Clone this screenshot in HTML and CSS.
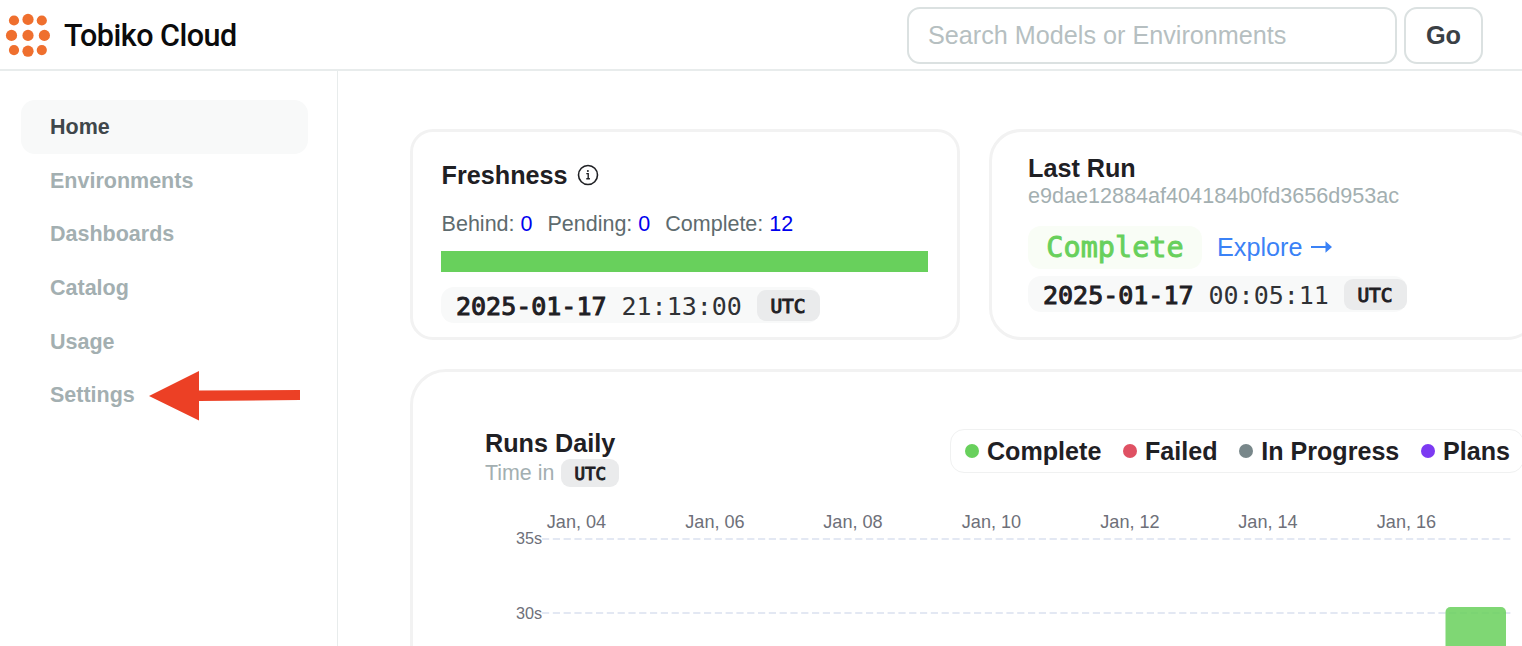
FILE: index.html
```
<!DOCTYPE html>
<html lang="en">
<head>
<meta charset="utf-8">
<title>Tobiko Cloud</title>
<link rel="stylesheet" href="styles.css">
</head>
<body>
<header class="header">
  <div class="brand">
    <svg class="logo" width="56" height="60" viewBox="0 0 56 60" fill="#ef6f2e">
      <circle cx="14" cy="20.5" r="5.1"/><circle cx="28" cy="19.4" r="5.6"/><circle cx="41.8" cy="20.5" r="5.1"/>
      <circle cx="11.5" cy="35.4" r="5.6"/><circle cx="28" cy="35.4" r="5.6"/><circle cx="44.4" cy="35.4" r="5.6"/>
      <circle cx="14" cy="50.1" r="5.1"/><circle cx="28" cy="51.2" r="5.6"/><circle cx="41.8" cy="50.1" r="5.1"/>
    </svg>
    <span class="brand-name">Tobiko Cloud</span>
  </div>
  <div class="search">
    <input class="search-input" type="text" placeholder="Search Models or Environments">
    <button class="go">Go</button>
  </div>
</header>
<div class="body">
  <nav class="sidebar">
    <a class="nav-item active">Home</a>
    <a class="nav-item">Environments</a>
    <a class="nav-item">Dashboards</a>
    <a class="nav-item">Catalog</a>
    <a class="nav-item">Usage</a>
    <a class="nav-item">Settings</a>
    <svg class="pointer" width="152" height="50" viewBox="0 0 152 50" fill="#ec4025"><path d="M0 25 50 0V19.5L151 19V29L50 30V49.500Z"/></svg>
  </nav>
  <main class="main">
    <div class="cards">
      <section class="card freshness">
        <h2 class="title">Freshness
          <svg class="info" width="22" height="22" viewBox="0 0 22 22" fill="none" stroke="#1f2024"><circle cx="11" cy="11" r="9.500" stroke-width="1.6"/><path d="M9.300 9.600h1.900v5M9.300 14.800h3.600" stroke-width="1.400"/><circle cx="10.900" cy="7" r="1" fill="#1f2024" stroke="none"/></svg>
        </h2>
        <div class="counts">
          <span>Behind: <b class="num">0</b></span><span>Pending: <b class="num">0</b></span><span>Complete: <b class="num">12</b></span>
        </div>
        <div class="bar"></div>
        <div class="stamp"><span class="date">2025-01-17</span><span class="time">21:13:00</span><span class="utc">UTC</span></div>
      </section>
      <section class="card last-run">
        <h2 class="title">Last Run</h2>
        <div class="hash">e9dae12884af404184b0fd3656d953ac</div>
        <div class="status-row"><span class="status">Complete</span><a class="explore">Explore
          <svg width="22" height="14" viewBox="0 0 22 14" fill="#3b82f6"><path d="M0 5.900h14.500V1.200L21 7l-6.500 5.800V8.100H0Z"/></svg></a></div>
        <div class="stamp"><span class="date">2025-01-17</span><span class="time">00:05:11</span><span class="utc">UTC</span></div>
      </section>
    </div>
    <section class="card runs">
      <div class="runs-head">
        <div>
          <h2 class="title">Runs Daily</h2>
          <div class="zone">Time in <span class="utc small">UTC</span></div>
        </div>
        <div class="legend">
          <span class="key"><i class="dot complete"></i>Complete</span>
          <span class="key"><i class="dot failed"></i>Failed</span>
          <span class="key"><i class="dot progress"></i>In Progress</span>
          <span class="key"><i class="dot plans"></i>Plans</span>
        </div>
      </div>
      <svg class="chart" width="1037" height="146" viewBox="485 500 1037 146">
        <g class="grid"><path d="M542 539H1511"/><path d="M542 613H1511"/></g>
        <path class="bar-shape" d="M1445.500 646V612a5 5 0 0 1 5-5h50.500a5 5 0 0 1 5 5v34Z"/>
        <g class="x-labels">
          <text x="576.500" y="528">Jan, 04</text><text x="715" y="528">Jan, 06</text><text x="853" y="528">Jan, 08</text><text x="991.500" y="528">Jan, 10</text><text x="1130" y="528">Jan, 12</text><text x="1268" y="528">Jan, 14</text><text x="1406.500" y="528">Jan, 16</text>
        </g>
        <g class="y-labels"><text x="542" y="543.500">35s</text><text x="542" y="618.500">30s</text></g>
      </svg>
    </section>
  </main>
</div>
</body>
</html>
```
FILE: styles.css
```
* { box-sizing: border-box; }
body {
  margin: 0;
  width: 1522px;
  height: 646px;
  overflow: hidden;
  background: #fff;
  color: #1f2024;
  font-family: "Liberation Sans", Arial, sans-serif;
}
.header {
  display: flex;
  justify-content: space-between;
  height: 71px;
  padding-right: 39px;
  border-bottom: 2px solid #e8ecec;
}
.brand { display: flex; align-items: flex-start; }
.logo { display: block; }
.brand-name {
  margin-left: 8px;
  font: 500 30.500px/72px Roboto, sans-serif;
  letter-spacing: -0.500px;
  color: #0b0b0c;
  white-space: nowrap;
}
.search { display: flex; gap: 7px; padding-top: 7px; }
.search-input, .go {
  height: 57px;
  border: 2px solid #dbe1e1;
  border-radius: 13px;
  background: #fff;
  font-family: inherit;
}
.search-input { width: 490px; padding: 0 19px; font-size: 25.200px; }
.search-input::placeholder { color: #b6bfc1; opacity: 1; }
.go { width: 79px; padding: 0; font-size: 25.300px; font-weight: 700; color: #3a4045; }
.body { display: flex; height: 575px; overflow: hidden; }
.sidebar {
  position: relative;
  flex: none;
  width: 338px;
  padding: 29px 29px 0 21px;
  border-right: 1px solid #e8ecec;
}
.nav-item {
  display: block;
  height: 53.700px;
  padding-left: 29px;
  border-radius: 14px;
  font-size: 21.500px;
  font-weight: 700;
  line-height: 55px;
  color: #a3afb1;
}
.nav-item.active { background: #f8f9f9; color: #3f474b; }
.pointer { position: absolute; left: 149px; top: 300px; }
.main { flex: none; width: 1184px; height: 575px; padding: 58px 0 0 72px; overflow: hidden; }
.cards { display: flex; gap: 29px; }
.card { border: 3px solid #f2f2f2; background: #fff; }
.freshness { flex: none; width: 550px; height: 211px; padding: 29px 28px 0; border-radius: 23px; }
.last-run { flex: none; width: 550px; height: 211px; padding: 22px 36px 0; border-radius: 32px; }
.title {
  display: flex;
  align-items: center;
  margin: 0;
  font-size: 25.200px;
  font-weight: 700;
  line-height: 28px;
}
.freshness .title, .counts { padding-left: 0.600px; }
.info { margin-left: 9px; }
.counts {
  display: flex;
  gap: 15px;
  margin-top: 22px;
  font-size: 21.500px;
  line-height: 26px;
  color: #5e6b6e;
}
.num { font-weight: 400; color: #0000ee; }
.bar { width: 487px; height: 21px; margin-top: 14px; background: #68d05c; }
.stamp {
  display: flex;
  align-items: center;
  width: 379px;
  height: 36px;
  margin-top: 15px;
  padding-left: 15px;
  border-radius: 13px;
  background: #f8f9f9;
  font-family: "DejaVu Sans Mono", monospace;
  font-size: 25px;
  line-height: 36px;
}
.date, .time { padding-top: 3px; }
.date { width: 165.500px; -webkit-text-stroke: 1px currentColor; }
.time { width: 135px; color: #303236; }
.utc {
  width: 63px;
  height: 31px;
  border-radius: 9px;
  background: #eaebec;
  font: 400 19.500px/33px "DejaVu Sans Mono", monospace;
  -webkit-text-stroke: 1px currentColor;
  text-align: center;
  color: #1f2024;
}
.hash { font-size: 21.600px; line-height: 27px; color: #a3afb1; }
.status-row { display: flex; align-items: center; gap: 15px; margin-top: 17px; }
.status {
  width: 174px;
  height: 43px;
  border-radius: 13px;
  background: #f9fdf6;
  font: 400 28.500px/44px "DejaVu Sans Mono", monospace;
  -webkit-text-stroke: 0.900px currentColor;
  text-align: center;
  color: #68d05c;
}
.explore { display: flex; align-items: center; gap: 9px; padding-bottom: 2px; font-size: 25.200px; line-height: 40px; color: #3b82f6; }
.last-run .stamp { margin-top: 7px; }
.runs { width: 1200px; height: 400px; margin-top: 29px; padding: 57px 0 0 72px; border-radius: 36px; }
.runs-head { display: flex; height: 71px; }
.runs-head .title { width: 465px; line-height: 28px; }
.zone { display: flex; align-items: center; gap: 7px; height: 32px; font-size: 21.400px; line-height: 26px; color: #a3afb1; }
.small { width: 58px; height: 28px; font-size: 17.500px; line-height: 31px; }
.legend {
  display: flex;
  align-items: center;
  gap: 21.700px;
  width: 574px;
  height: 44px;
  padding-left: 14px;
  border: 1px solid #f0f1f1;
  border-radius: 14px;
}
.key { display: flex; align-items: center; font-size: 25.100px; font-weight: 700; white-space: nowrap; }
.dot { width: 14px; height: 14px; margin-right: 8px; border-radius: 50%; }
.complete { background: #68d05c; }
.failed { background: #df5163; }
.progress { background: #78878a; }
.plans { background: #7c3af2; }
.chart { display: block; }
.bar-shape { fill: #68d05c; fill-opacity: 0.850; }
.grid { stroke: #e3e8f3; stroke-width: 2; stroke-dasharray: 7.200 3.600; }
.x-labels { font-size: 18.100px; fill: #6e7079; text-anchor: middle; }
.y-labels { font-size: 16.200px; fill: #6e7079; text-anchor: end; }
```
